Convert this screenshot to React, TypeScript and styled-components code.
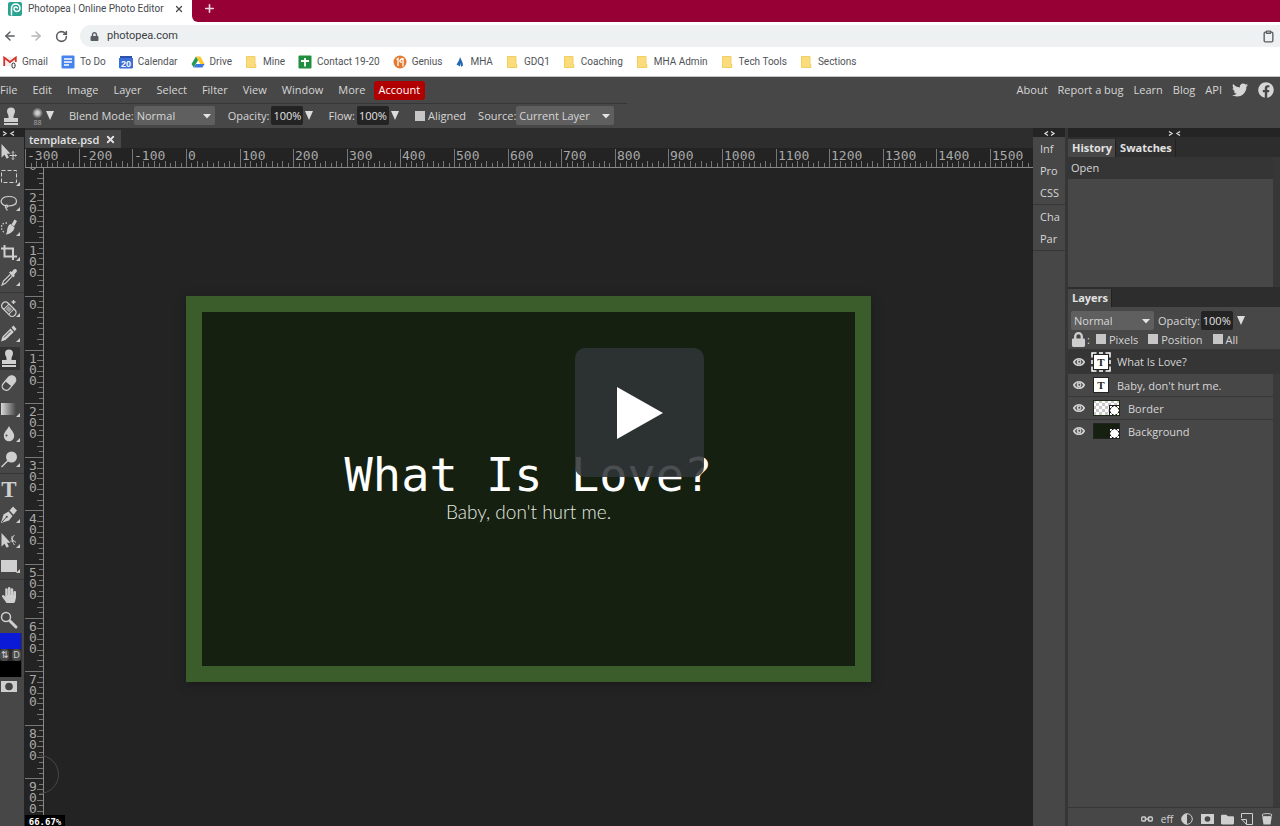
import React from "react";
import styled, { createGlobalStyle, css } from "styled-components";
import { FaFacebook, FaHandPaper, FaTwitter, FaFolder, FaLock } from "react-icons/fa";
import { ArrowLeft, ArrowRight, RotateCw, Clipboard, Plus, X } from "lucide-react";

const ui = `"Open Sans", "Noto Sans", sans-serif`;
const chrome = `Roboto, "Open Sans", sans-serif`;
const mono = `"DejaVu Sans Mono", monospace`;

const c = {
  panel: "#474747",
  dark: "#2d2d2d",
  darker: "#232323",
  selected: "#353535",
  line: "#363636",
  text: "#d6d6d6",
  icon: "#cfcfcf",
};

const Global = createGlobalStyle`
  *, *::before, *::after { box-sizing: border-box; }
  body { margin: 0; background: ${c.darker}; font-family: ${ui}; font-size: 11px; color: ${c.text}; }
  button, input, select { font: inherit; color: inherit; margin: 0; padding: 0; border: 0; background: none; border-radius: 0; }
  a { color: inherit; text-decoration: none; }
  svg { display: block; flex: none; }
`;

const Page = styled.div`
  display: flex;
  flex-direction: column;
  height: 100vh;
  overflow: hidden;
`;

/* Browser frame */

const TabStrip = styled.div`
  display: flex;
  align-items: stretch;
  height: 22px;
  background: #fff;
`;

const BrowserTab = styled.div`
  display: flex;
  align-items: center;
  gap: 6px;
  width: 192px;
  padding: 0 8px 5px;
  background: #fff;
  color: #45494d;
  font: 10px/16px ${chrome};
`;

const TabTitle = styled.span`
  flex: 1;
  white-space: nowrap;
`;

const TabRest = styled.div`
  flex: 1;
  display: flex;
  align-items: center;
  padding: 0 11px 5px;
  height: 22px;
  border-bottom-left-radius: 6px;
  background: #970034;
  color: #f0d5de;
`;

const IconButton = styled.button`
  display: grid;
  place-items: center;
  cursor: pointer;
`;

const AddressRow = styled.div`
  display: flex;
  align-items: center;
  gap: 12px;
  height: 28px;
  padding-left: 3px;
  background: #fff;
  color: #5a5e62;
`;

const AddressBox = styled.label`
  flex: 1;
  display: flex;
  align-items: center;
  gap: 8px;
  height: 22px;
  padding: 0 5px 0 10px;
  border-radius: 11px 0 0 11px;
  background: #eef1f2;
`;

const AddressInput = styled.input`
  flex: 1;
  font: 11px/16px ${chrome};
  color: #3c4043;
`;

const Bookmarks = styled.nav`
  display: flex;
  align-items: center;
  height: 27px;
  gap: 13px;
  padding: 0 3px 2px;
  background: #fff;
  border-bottom: 1px solid #c4c4c4;
  color: #505357;
  font: 10px/16px ${chrome};
`;

const Bookmark = styled.a`
  display: flex;
  align-items: center;
  gap: 5px;
  white-space: nowrap;
`;

/* Editor bars */

const MenuBar = styled.header`
  display: flex;
  align-items: center;
  justify-content: space-between;
  height: 26px;
  background: ${c.panel};
`;

const MenuGroup = styled.nav<{ $gap: number }>`
  display: flex;
  align-items: center;
  gap: ${(p) => p.$gap}px;
  padding: 0 6px 0 0;
  line-height: 18px;
`;

const Account = styled.button`
  margin-left: -7px;
  padding: 0 5px;
  height: 19px;
  border-radius: 3px;
  background: #b10000;
  color: #fff;
`;

const OptionsBar = styled.div`
  display: flex;
  align-items: center;
  height: 25px;
  padding-left: 3px;
  background: linear-gradient(${c.line}, ${c.line}) 0 0 / 627px 1px no-repeat ${c.panel};
  white-space: nowrap;
`;

const OptionGroup = styled.div<{ $gap?: number; $after: number }>`
  display: flex;
  align-items: center;
  gap: ${(p) => p.$gap ?? 2}px;
  margin-right: ${(p) => p.$after}px;
`;

const BrushPreview = styled.button`
  display: flex;
  align-items: center;
  gap: 3px;
`;

const SelectBox = styled.div<{ $width: number }>`
  position: relative;
  width: ${(p) => p.$width}px;
  height: 19px;

  select {
    width: 100%;
    height: 19px;
    padding-left: 3px;
    border-radius: 2px;
    background: #5f5f5f;
    appearance: none;
  }

  svg {
    position: absolute;
    right: 4px;
    top: 8px;
    pointer-events: none;
  }
`;

const NumberBox = styled.input`
  width: 32px;
  height: 19px;
  border-radius: 2px;
  background: ${c.darker};
  text-align: center;
  color: #e4e4e4;
`;

const Tick = styled.input`
  appearance: none;
  width: 10px;
  height: 10px;
  background: #c6c6c6;
`;

const CheckLabel = styled.label`
  display: flex;
  align-items: center;
  gap: 3px;
`;

/* Workspace */

const Work = styled.div`
  flex: 1;
  min-height: 0;
  display: flex;
  background: ${c.darker};
`;

const Collapse = styled.button`
  flex: none;
  display: grid;
  place-items: center;
  width: 100%;
  height: 9px;
  padding-top: 2px;
  background: #242424;
  color: #ddd;
`;

const ToolColumn = styled.aside`
  width: 24px;
  display: flex;
  flex-direction: column;
  background: ${c.panel};

  > ${Collapse} {
    padding-right: 7px;
  }
`;

const ToolGroup = styled.div`
  display: flex;
  flex-direction: column;
  padding: 3px 0 2px;
  border-bottom: 1px solid ${c.line};

  &:last-of-type {
    padding-bottom: 0;
    border-bottom: 0;
  }
`;

const ToolButton = styled.button<{ $active?: boolean }>`
  display: block;
  width: 22px;
  height: 25px;
  ${(p) =>
    p.$active &&
    css`
      background: linear-gradient(#333, #333) 0 1px / 20px 23px no-repeat;
    `}
`;

const Colours = styled.section`
  display: flex;
  flex-direction: column;
  width: 22px;
  height: 44px;
  border-right: 1px solid #333;
  background: #000;
`;

const Swatch = styled.button<{ $colour: string }>`
  flex: 1;
  background: ${(p) => p.$colour};
`;

const SwapRow = styled.div`
  display: flex;
  justify-content: space-between;
  height: 12px;
  background: #2a2a2a;
  font-size: 9px;
  line-height: 12px;

  button {
    width: 9px;
    border-radius: 4px;
    background: #4a4a4a;
  }
`;

const DocColumn = styled.main`
  flex: 1;
  min-width: 0;
  display: flex;
  flex-direction: column;
  margin-left: 1px;
  position: relative;
`;

const DocTabs = styled.div`
  display: flex;
  align-items: flex-end;
  height: 20px;
  background: ${c.dark};
`;

const DocTab = styled.div`
  display: flex;
  align-items: center;
  gap: 6px;
  height: 18px;
  padding: 0 5px 0 4px;
  background: ${c.panel};
  font-weight: 600;
  color: #e2e2e2;
`;

const TopRuler = styled.div`
  height: 20px;
`;

const Body = styled.div`
  flex: 1;
  min-height: 0;
  display: flex;
`;

const SideRuler = styled.div`
  width: 19px;
`;

const Stage = styled.div`
  flex: 1;
  display: flex;
  align-items: center;
  justify-content: center;
  padding: 0 20px 16px 0;
`;

const Artboard = styled.section`
  display: flex;
  flex-direction: column;
  align-items: center;
  width: 685px;
  height: 386px;
  padding-top: 136px;
  border: 16px solid #3b5d2c;
  background: #152010;
  box-shadow: 0 2px 8px #1a1a1a;
  color: #fff;

  h1 {
    margin: 0;
    font: 400 47px/54px ${mono};
    white-space: nowrap;
  }

  p {
    margin: 0;
    font: 300 19px/20px Lato, sans-serif;
    color: #e6eae2;
  }
`;

const BrushRing = styled.div`
  position: absolute;
  left: -5px;
  bottom: 32px;
  width: 39px;
  height: 39px;
  clip-path: inset(0 0 0 19px);
  border: 1px solid #484848;
  border-radius: 50%;
`;

const ZoomBadge = styled.div`
  position: absolute;
  left: 0;
  bottom: 0;
  width: 40px;
  height: 11px;
  background: #000;
  color: #fff;
  font: 700 9px/14px ${mono};
  text-align: center;
`;

const SideTabs = styled.nav`
  width: 32px;
  display: flex;
  flex-direction: column;
  background: ${c.panel};
`;

const SideGroup = styled.div`
  display: flex;
  flex-direction: column;
  padding-bottom: 1px;
  border-bottom: 1px solid ${c.line};
`;

const SideTab = styled.button`
  height: 22px;
  padding-left: 7px;
  text-align: left;
`;

const Panels = styled.aside`
  width: 215px;
  display: flex;
  flex-direction: column;
  border-left: 3px solid #363636;
  background: ${c.dark};
`;

const PanelTabs = styled.div`
  display: flex;
  height: 18px;
  margin-top: 2px;
`;

const PanelTab = styled.button<{ $active?: boolean }>`
  padding: 0 3px 1px 4px;
  font-weight: 700;
  color: #e2e2e2;
  background: ${(p) => (p.$active ? c.panel : "#2f2f2f")};
  border-right: 1px solid #222;
`;

const History = styled.div`
  display: flex;
  flex-direction: column;
  height: 130px;
  padding-right: 7px;
  background: #373737;
`;

const HistoryItem = styled.button`
  height: 22px;
  padding: 0 0 1px 3px;
  text-align: left;
  background: ${c.selected};
`;

const Blank = styled.div`
  flex: 1;
  background: ${c.panel};
`;

const LayerOptions = styled.div`
  display: flex;
  flex-direction: column;
  gap: 1px;
  height: 43px;
  padding: 4px 3px 0;
  background: ${c.panel};
  border-bottom: 1px solid ${c.line};
`;

const OptionLine = styled.div<{ $gap: number }>`
  display: flex;
  align-items: center;
  gap: ${(p) => p.$gap}px;
  height: 18px;
`;

const LayerArea = styled.div`
  flex: 1;
  display: flex;
  flex-direction: column;
  padding-right: 7px;
  background: #3a3a3a;
`;

const LayerList = styled.ul`
  margin: 0;
  padding: 0;
  list-style: none;
`;

const LayerRow = styled.li<{ $active?: boolean }>`
  display: flex;
  align-items: center;
  gap: 8px;
  height: ${(p) => (p.$active ? 24 : 23)}px;
  padding-left: 5px;
  border-bottom: 1px solid ${c.line};
  background: ${(p) => (p.$active ? c.selected : c.panel)};
  margin-right: ${(p) => (p.$active ? -7 : 0)}px;
  &:last-child {
    border-bottom-color: ${c.panel};
  }
`;

const PanelFooter = styled.div`
  display: flex;
  align-items: center;
  justify-content: flex-end;
  gap: 4px;
  height: 19px;
  padding: 4px 5px 0 0;
  border-top: 1px solid ${c.line};
  background: ${c.panel};

  button {
    width: 16px;
    height: 14px;
    display: grid;
    place-items: center;
    line-height: 14px;
    font-size: 10px;
  }
`;

const PlayButton = styled.button`
  position: fixed;
  left: 50%;
  top: 50%;
  width: 129px;
  height: 129px;
  margin: -65px 0 0 -65px;
  display: grid;
  place-items: center;
  border-radius: 10px;
  background: rgba(48, 52, 55, 0.87);
`;

/* Drawings */

const Caret = ({ size = 8 }: { size?: number }) => (
  <svg width={size} height="5" viewBox="0 0 8 5">
    <path d="M0 0H8L4 4.6Z" fill="#e4e4e4" />
  </svg>
);

const Arrow = () => (
  <svg width="8" height="9" viewBox="0 0 8 9">
    <path d="M0 0H8L4 9Z" fill="#dcdcdc" />
  </svg>
);

const Chevrons = ({ out }: { out?: boolean }) => (
  <svg width="13" height="7" viewBox="0 0 13 7" fill="none" stroke="#ddd" strokeWidth="1.300">
    <path d={out ? "M5 1.500 2 3.500 5 5.500M8 1.500 11 3.500 8 5.500" : "M1 1.500 4 3.500 1 5.500M12 1.500 9 3.500 12 5.500"} />
  </svg>
);

const Corner = () => <path d="M20 17v4h-4z" fill={c.icon} />;

const stamp = "M9 3.500a4 4 0 0 1 4 4c0 2-1.500 3-1.500 5v1.500H16V18H2v-4h4.500v-1.500C6.500 10.500 5 9.500 5 7.500a4 4 0 0 1 4-4ZM2 19h14v2H2Z";

const f = c.icon;
type Tool = { name: string; corner?: boolean; active?: boolean; art: React.ReactNode };
const groups: Tool[][] = [
  [
    { name: "Move", art: <><path d="M1.500 4v13.500l3-2.700 2.200 4 2.200-1.200-2-3.800h3.600Z" fill={f} /><path d="M13 11.500v8M9.500 15.500h7M12 12.500l1-1 1 1M12 18.500l1 1 1-1M15.500 14.500l1 1-1 1" stroke={f} fill="none" /></> },
    { name: "Select", corner: true, art: <rect x="1.500" y="5.500" width="15" height="12" fill="none" stroke={f} strokeDasharray="4 2" /> },
    { name: "Lasso", corner: true, art: <path d="M5.500 16C2 14.500.7 12.500 1.300 10.500 2 8 5.500 6.500 9 6.500c4.500 0 7.500 2 7.500 4.800 0 2.900-3.500 4.700-8.500 4.700-.8-1.500-2.800-1-2.800 0 0 1.200 2 1.400 2.800.3M5.500 17c.3 2 1.500 2 1.800 3.500" fill="none" stroke={f} strokeWidth="1.200" /> },
    { name: "Quick Selection", corner: true, art: <><path d="M14.500 4.500l2.500 1.500-2.800 5.200-2.700-1.700ZM10.500 9l4 3.200c-.5 4-3.500 6.500-9 7.300 2.200-2 1.200-4.500 2.200-7 .6-1.700 1.500-2.800 2.800-3.500Z" fill={f} /><path d="M7 8H5C2.500 8.500 1.500 10 1.500 12.500S3 17 5 17.500" fill="none" stroke={f} strokeWidth="1.300" strokeDasharray="1.500 1.500" /></> },
    { name: "Crop", corner: true, art: <path d="M4.500 5v11.500H17M1 8.500h12V20" fill="none" stroke={f} strokeWidth="2" /> },
    { name: "Eyedropper", corner: true, art: <><path d="M9 7.500l1.700-1.200 1 .6 2-2.400c1.900-1.700 4.300.7 2.800 2.600L14.200 9.500l.6 1.200-1.600 1.800Z" fill={f} /><path d="M10.200 9.500 3.500 16 2 20l3.500-1.700 6.500-7" fill="none" stroke={f} strokeWidth="1.200" /></> },
  ],
  [
    { name: "Heal", corner: true, art: <><g transform="rotate(45 9 13)"><rect x="0.500" y="9.500" width="17" height="7.500" rx="3.500" fill="none" stroke={f} strokeWidth="1.300" /><path d="M5.500 9.500v7.500M12.500 9.500v7.500" stroke={f} /><rect x="6.500" y="11" width="5" height="4.500" fill="#999" /></g><path d="M13.500 4v4M11.500 6h4" stroke={f} strokeWidth="1.300" /></> },
    { name: "Pencil", corner: true, art: <><path d="M11.500 6.500 13.500 4.500l3 3.500-1.800 2.200ZM10.500 7.500l3.300 3.500-8.300 8L1 20.500 2.500 15.500Z" fill={f} /><path d="M4 16.500 10.500 10" stroke="#474747" /></> },
    { name: "Clone Stamp", active: true, art: <path d={stamp} fill={f} /> },
    { name: "Eraser", art: <g transform="rotate(-50 9 12)"><rect x="0.700" y="8" width="16.500" height="8" rx="4" fill="none" stroke={f} strokeWidth="1.300" /><path d="M8 8h5a4 4 0 0 1 0 8H8Z" fill={f} /></g> },
    { name: "Gradient", corner: true, art: <rect x="1" y="7" width="15" height="12" fill="url(#fade)" /> },
    { name: "Blur", corner: true, art: <><path d="M9 5c1.500 3.500 5.200 6 5.200 10a5.200 5.200 0 0 1-10.400 0C3.800 11 7.500 8.500 9 5Z" fill={f} /><circle cx="6.500" cy="14.500" r="1" fill="#474747" /></> },
    { name: "Dodge", corner: true, art: <><circle cx="11.500" cy="11" r="5.500" fill={f} /><path d="M8 14.500 1.500 21" stroke={f} strokeWidth="1.500" /></> },
  ],
  [
    { name: "Type", art: <text x="9" y="20" textAnchor="middle" fill={f} fontFamily="Liberation Serif, serif" fontWeight="700" fontSize="23">T</text> },
    { name: "Pen", corner: true, art: <><path d="M1 21 3.500 12.500 8.500 9.500l4 4.500-3.500 4.500Z" fill={f} /><path d="M2 20l4.500-5" stroke="#474747" /><circle cx="6.800" cy="14.700" r="1" fill="#474747" /><path d="M9.500 8.500 13 4.500l4 4-3.500 4.200Z" fill={f} /></> },
    { name: "Path Select", corner: true, art: <><path d="M1.500 6v13.500l3-2.700 2.200 4 2.200-1.200-2-3.800h3.600Z" fill={f} /><path d="M14.500 8c-3 3-3 6 0 10M11 11.500l5 4M12 9v3M10.500 14h3" stroke={f} fill="none" /></> },
    { name: "Shape", corner: true, art: <rect x="1" y="8" width="16" height="12" fill={f} /> },
  ],
  [
    { name: "Hand", art: <FaHandPaper x="1" y="4" size={16} color={f} /> },
    { name: "Zoom", art: <><circle cx="6" cy="9" r="4.500" fill="none" stroke={f} strokeWidth="1.500" /><path d="M10 13l6 6" stroke={f} strokeWidth="3" strokeLinecap="round" /></> },
  ],
];

const UNIT = 53.6;
const DIGIT = 11;

function Ruler({ vertical }: { vertical?: boolean }) {
  const box = React.useRef<SVGSVGElement>(null);
  const [length, setLength] = React.useState(vertical ? 658 : 1008);

  React.useLayoutEffect(() => {
    const measure = () => {
      const r = box.current!.getBoundingClientRect();
      setLength(vertical ? r.height : r.width);
    };
    measure();
    window.addEventListener("resize", measure);
    return () => window.removeEventListener("resize", measure);
  }, [vertical]);

  const zero = vertical ? 128 : 161;
  const marks: React.ReactNode[] = [];
  for (let n = -3; zero + n * UNIT < length; n++) {
    const at = zero + n * UNIT;
    const px = Math.round(at) + 0.5;
    marks.push(<path key={`m${n}`} d={vertical ? `M0 ${px}H18` : `M${px} 1V20`} stroke="#777" />);
    for (let i = 1; i < 10; i++) {
      const p = Math.round(at + (i * UNIT) / 10) + 0.5;
      const len = i % 2 ? 4 : 6;
      marks.push(
        <path key={`t${n}-${i}`} d={vertical ? `M${18 - len} ${p}H18` : `M${p} ${19 - len}V19`} stroke="#777" />
      );
    }
    if (vertical) {
      String(Math.abs(n * 100)).split("").forEach((d, i) => {
        const y = Math.round(at) + 13 + i * DIGIT;
        if (y > 0 && y < length) marks.push(<text key={`l${n}-${i}`} x="4" y={y}>{d}</text>);
      });
    } else if (at + 36 < length) {
      marks.push(<text key={`l${n}`} x={Math.round(at) + 2} y="12">{n * 100}</text>);
    }
  }
  return (
    <svg ref={box} width="100%" height="100%" fill="#a8a8a8" fontFamily={mono} fontSize="13">
      {marks}
      {vertical ? <path d={`M18.500 0V${length}`} stroke="#888" /> : <path d={`M0 19.500H${length}`} stroke="#888" />}
    </svg>
  );
}

const folder = (
  <svg width="13" height="14" viewBox="0 0 13 14">
    <path d="M1 1h9v8h1v4H1Z" fill="#fbdc7c" /><path d="M1.500 1.500h8.500v8h.8v3H1.500Z" fill="none" stroke="#f2cf63" />
  </svg>
);

const bookmarks: [string, React.ReactNode][] = [
  ["Gmail", <svg key="g" width="14" height="14" viewBox="0 0 14 14"><path d="M1 2h12v9H1Z" fill="#f4eeee" /><path d="M1.200 11V2.500L7 7l5.800-4.500V7" fill="none" stroke="#d3352b" strokeWidth="1.800" /><rect x="8" y="7" width="5" height="7" fill="#fff" /><rect x="9" y="8" width="3" height="5" rx="1.500" fill="none" stroke="#222" /></svg>],
  ["To Do", <svg key="t" width="14" height="14" viewBox="0 0 14 14"><rect x="0.500" y="0.500" width="13" height="13" rx="1" fill="#4583ee" /><path d="M3 4h8M3 7h8M3 10h5" stroke="#fff" strokeWidth="1.400" /></svg>],
  ["Calendar", <svg key="c" width="14" height="14" viewBox="0 0 14 14"><path d="M1 1h12v3H1Z" fill="#2d51a8" /><path d="M0 3h14v9.500l-1 1H1l-1-1Z" fill="#3c6fd8" /><text x="7" y="11.500" textAnchor="middle" fontSize="9" fontWeight="700" fontFamily="Liberation Sans, sans-serif" fill="#fff">20</text></svg>],
  ["Drive", <svg key="d" width="14" height="14" viewBox="0 0 14 14"><path d="M5 1.500 0.500 9 2.700 12.500 7.200 5Z" fill="#249a56" /><path d="M5 1.500h4.400L13.600 9H9.300Z" fill="#fdc92f" /><path d="M5 9h8.600l-2.200 3.500H2.800Z" fill="#3b78e0" /></svg>],
  ["Mine", folder],
  ["Contact 19-20", <svg key="k" width="14" height="14" viewBox="0 0 14 14"><rect x="0.500" y="0.500" width="13" height="13" rx="1" fill="#1f8e3f" /><path d="M3 6h8M7 3v8.500" stroke="#fff" strokeWidth="1.800" /></svg>],
  ["Genius", <svg key="n" width="14" height="14" viewBox="0 0 14 14"><circle cx="7" cy="7" r="6.500" fill="#e5792f" /><path d="M3.500 4.500 5 3.500V11M10 3.500c-4 1-4 3.500-1 3.700M10 3v8.500" fill="none" stroke="#fff" strokeWidth="1.300" /></svg>],
  ["MHA", <svg key="m" width="10" height="14" viewBox="0 0 10 14"><path d="M5 2c1 2.500 3 5 3 8.500L6 12V8L5 11.500 1.500 9.500C3 7 4.500 5 5 2Z" fill="#2468b4" /></svg>],
  ["GDQ1", folder],
  ["Coaching", folder],
  ["MHA Admin", folder],
  ["Tech Tools", folder],
  ["Sections", folder],
];

const Eye = () => (
  <svg width="12" height="10" viewBox="0 0 13 10">
    <path d="M.8 5C3.500.2 9.500.2 12.200 5 9.500 9.800 3.500 9.800.8 5Z" fill="none" stroke={f} strokeWidth="1.700" />
    <circle cx="6.500" cy="5" r="2.600" fill={f} /><circle cx="6.800" cy="4.700" r="1" fill="#474747" />
  </svg>
);

const SmartMark = () => (
  <g>
    <rect x="16" y="5" width="10" height="10" fill="#1a1a1a" />
    <rect x="18" y="7" width="7" height="7" rx="1.500" fill="#fff" />
    <path d="M17 6.500h2M20.500 6.500h2M24 6.500h2M17 14.500h2M20.500 14.500h2M24 14.500h2M17.500 7v1M25.500 7v1M17.500 13v1M25.500 13v1M17.500 9.500v2M25.500 9.500v2" stroke="#fff" />
  </g>
);

const TextThumb = ({ marked }: { marked?: boolean }) => (
  <svg width="16" height="16" viewBox="0 0 16 16" overflow="visible">
    {marked && <path d="M-1 3.500V-1H3.500M6 -1H10M12.500 -1H17V3.500M17 6V10M17 12.500V17H12.500M10 17H6M3.500 17H-1V12.500M-1 10V6" fill="none" stroke="#fff" strokeWidth="1.500" />}
    <rect x="0.500" y="0.500" width="15" height="15" fill="#fff" stroke="#222" />
    <text x="8" y="12" textAnchor="middle" fontFamily="Liberation Serif, serif" fontWeight="700" fontSize="11" fill="#222">T</text>
  </svg>
);

const BorderThumb = () => (
  <svg width="27" height="16" viewBox="0 0 27 16">
    <defs><pattern id="checks" width="6" height="6" patternUnits="userSpaceOnUse"><rect width="6" height="6" fill="#fff" /><path d="M0 0h3v3H0ZM3 3h3v3H3Z" fill="#c9c9c9" /></pattern></defs>
    <rect x="0.500" y="0.500" width="26" height="15" fill="url(#checks)" stroke="#1c2a16" />
    <SmartMark />
  </svg>
);

const FillThumb = () => (
  <svg width="27" height="16" viewBox="0 0 27 16">
    <rect x="0.500" y="0.500" width="26" height="15" fill="#152010" stroke="#222" />
    <SmartMark />
  </svg>
);

const layers = [
  { name: "What Is Love?", active: true, thumb: <TextThumb marked /> },
  { name: "Baby, don't hurt me.", thumb: <TextThumb /> },
  { name: "Border", thumb: <BorderThumb /> },
  { name: "Background", thumb: <FillThumb /> },
];

const footer: [string, React.ReactNode][] = [
  ["Link", <svg key="1" width="12" height="6" viewBox="0 0 12 6" fill="none" stroke={f} strokeWidth="1.300"><rect x="0.700" y="1" width="4" height="4" rx="1" /><rect x="7.300" y="1" width="4" height="4" rx="1" /><path d="M3.500 3h5" /></svg>],
  ["Effects", "eff"],
  ["Adjustment", <svg key="3" width="12" height="12" viewBox="0 0 12 12"><circle cx="6" cy="6" r="5.300" fill="none" stroke={f} /><path d="M6 .7a5.300 5.300 0 0 0 0 10.600Z" fill={f} /></svg>],
  ["Mask", <svg key="4" width="13" height="10" viewBox="0 0 13 10"><rect width="13" height="10" fill={f} /><circle cx="6.500" cy="5" r="2.800" fill="#474747" /></svg>],
  ["Folder", <FaFolder key="5" size={13} color={f} />],
  ["New Layer", <svg key="6" width="12" height="12" viewBox="0 0 12 12" fill="none" stroke={f}><path d="M.5 5V.5h11v11H5.500M.5 6v0L5.500 11.500V6.500H.5Z" /></svg>],
  ["Delete", <svg key="7" width="12" height="12" viewBox="0 0 12 13"><ellipse cx="6" cy="2.300" rx="5.500" ry="1.700" fill="none" stroke={f} /><path d="M.8 3.500c2 1.200 8.400 1.200 10.400 0L9.800 12.500H2.200Z" fill={f} /></svg>],
];

function Select({ label, value, width }: { label: string; value: string; width: number }) {
  return (
    <SelectBox $width={width}>
      <select aria-label={label} defaultValue={value}><option>{value}</option></select>
      <Caret />
    </SelectBox>
  );
}

export default function App() {
  return (
    <Page>
      <Global />
      <TabStrip>
        <BrowserTab>
          <svg width="14" height="14" viewBox="0 0 14 14">
            <rect width="14" height="14" rx="2" fill="#2aa390" />
            <path d="M3.500 13.500V6.500C3.500 0 12 1 12 6c0 4.500-6 4.500-6 .8 0-2.500 3.500-2.300 3.300-.2" fill="none" stroke="#fff" strokeWidth="1.500" />
          </svg>
          <TabTitle>Photopea | Online Photo Editor</TabTitle>
          <IconButton aria-label="Close tab"><X size={10} strokeWidth={3} /></IconButton>
        </BrowserTab>
        <TabRest>
          <IconButton aria-label="New tab"><Plus size={13} strokeWidth={3} /></IconButton>
        </TabRest>
      </TabStrip>
      <AddressRow>
        <IconButton aria-label="Back"><ArrowLeft size={14} strokeWidth={2.5} /></IconButton>
        <IconButton aria-label="Forward"><ArrowRight size={14} strokeWidth={2.5} color="#b4b6b8" /></IconButton>
        <IconButton aria-label="Reload"><RotateCw size={13} strokeWidth={2.8} /></IconButton>
        <AddressBox>
          <FaLock size={9} />
          <AddressInput aria-label="Address" defaultValue="photopea.com" />
          <Clipboard size={13} strokeWidth={2.5} />
        </AddressBox>
      </AddressRow>
      <Bookmarks>
        {bookmarks.map(([name, icon]) => (
          <Bookmark key={name} href="#">{icon}{name}</Bookmark>
        ))}
      </Bookmarks>

      <MenuBar>
        <MenuGroup $gap={15}>
          {["File", "Edit", "Image", "Layer", "Select", "Filter", "View", "Window", "More"].map((m) => (
            <button key={m}>{m}</button>
          ))}
          <Account>Account</Account>
        </MenuGroup>
        <MenuGroup $gap={10}>
          {["About", "Report a bug", "Learn", "Blog", "API"].map((m) => <a key={m} href="#">{m}</a>)}
          <a href="#" aria-label="Twitter"><FaTwitter size={16} /></a>
          <a href="#" aria-label="Facebook"><FaFacebook size={16} /></a>
        </MenuGroup>
      </MenuBar>

      <OptionsBar>
        <OptionGroup $after={13}>
          <svg width="16" height="20" viewBox="1 2 16 20"><path d={stamp} fill={f} /></svg>
        </OptionGroup>
        <OptionGroup $after={15}>
          <BrushPreview aria-label="Brush">
            <svg width="11" height="20" viewBox="0 0 11 20">
              <defs><radialGradient id="soft"><stop offset="30%" stopColor="#ccc" /><stop offset="100%" stopColor="#ccc" stopOpacity="0" /></radialGradient></defs>
              <circle cx="5.500" cy="7" r="5.500" fill="url(#soft)" />
              <text x="5.500" y="19" textAnchor="middle" fontSize="7" fill="#aaa">88</text>
            </svg>
            <Arrow />
          </BrushPreview>
        </OptionGroup>
        <OptionGroup $after={13} $gap={0}>
          <span>Blend Mode:</span><Select label="Blend Mode" value="Normal" width={81} />
        </OptionGroup>
        <OptionGroup $after={15}>
          <label htmlFor="opacity">Opacity:</label><NumberBox id="opacity" defaultValue="100%" /><Arrow />
        </OptionGroup>
        <OptionGroup $after={16}>
          <label htmlFor="flow">Flow:</label><NumberBox id="flow" defaultValue="100%" /><Arrow />
        </OptionGroup>
        <OptionGroup $after={12}>
          <CheckLabel><Tick type="checkbox" />Aligned</CheckLabel>
        </OptionGroup>
        <OptionGroup $after={0} $gap={0}>
          <span>Source:</span><Select label="Source" value="Current Layer" width={98} />
        </OptionGroup>
      </OptionsBar>

      <Work>
        <ToolColumn>
          <Collapse aria-label="Collapse tools"><Chevrons /></Collapse>
          <svg width="0" height="0"><defs><linearGradient id="fade"><stop stopColor="#d8d8d8" /><stop offset="1" stopColor="#474747" /></linearGradient></defs></svg>
          {groups.map((tools, g) => (
            <ToolGroup key={g}>
              {tools.map((t) => (
                <ToolButton key={t.name} $active={t.active} aria-label={t.name}>
                  <svg width="22" height="25" viewBox="0 0 22 25">{t.art}{t.corner && <Corner />}</svg>
                </ToolButton>
              ))}
            </ToolGroup>
          ))}
          <Colours>
            <Swatch $colour="#0a1ad6" aria-label="Foreground" />
            <SwapRow><button>⇅</button><button>D</button></SwapRow>
            <Swatch $colour="#000" aria-label="Background" />
          </Colours>
          <ToolButton aria-label="Quick Mask">
            <svg width="22" height="25" viewBox="0 0 22 25"><rect x="1" y="4" width="16" height="11" fill={f} /><circle cx="9" cy="9.500" r="3.800" fill="#444" /></svg>
          </ToolButton>
        </ToolColumn>

        <DocColumn>
          <DocTabs>
            <DocTab>template.psd<IconButton aria-label="Close document"><X size={11} strokeWidth={4} /></IconButton></DocTab>
          </DocTabs>
          <TopRuler><Ruler /></TopRuler>
          <Body>
            <SideRuler><Ruler vertical /></SideRuler>
            <Stage>
              <Artboard>
                <h1>What Is Love?</h1>
                <p>Baby, don't hurt me.</p>
              </Artboard>
            </Stage>
          </Body>
          <BrushRing />
          <ZoomBadge>66.67%</ZoomBadge>
        </DocColumn>

        <SideTabs>
          <Collapse aria-label="Expand panels"><Chevrons out /></Collapse>
          <SideGroup>{["Inf", "Pro", "CSS"].map((t) => <SideTab key={t}>{t}</SideTab>)}</SideGroup>
          <SideGroup>{["Cha", "Par"].map((t) => <SideTab key={t}>{t}</SideTab>)}</SideGroup>
        </SideTabs>

        <Panels>
          <Collapse aria-label="Collapse panels"><Chevrons /></Collapse>
          <PanelTabs><PanelTab $active>History</PanelTab><PanelTab>Swatches</PanelTab></PanelTabs>
          <History><HistoryItem>Open</HistoryItem><Blank /></History>
          <PanelTabs><PanelTab $active>Layers</PanelTab></PanelTabs>
          <LayerOptions>
            <OptionLine $gap={4}>
              <Select label="Layer blend mode" value="Normal" width={83} />
              <OptionGroup $after={0} $gap={1}>
                <label htmlFor="layer-opacity">Opacity:</label>
                <NumberBox id="layer-opacity" defaultValue="100%" />
              </OptionGroup>
              <Arrow />
            </OptionLine>
            <OptionLine $gap={10}>
              <OptionGroup $after={-4} $gap={1}><FaLock size={15} color={f} />:</OptionGroup>
              {["Pixels", "Position", "All"].map((t) => (
                <CheckLabel key={t}><Tick type="checkbox" />{t}</CheckLabel>
              ))}
            </OptionLine>
          </LayerOptions>
          <LayerArea>
            <LayerList>
              {layers.map((l) => (
                <LayerRow key={l.name} $active={l.active}><Eye />{l.thumb}{l.name}</LayerRow>
              ))}
            </LayerList>
            <Blank />
          </LayerArea>
          <PanelFooter>
            {footer.map(([name, icon]) => <button key={name} aria-label={name}>{icon}</button>)}
          </PanelFooter>
        </Panels>
      </Work>

      <PlayButton aria-label="Play">
        <svg width="46" height="52" viewBox="0 0 46 52"><path d="M0 0 46 26 0 52Z" fill="#fff" /></svg>
      </PlayButton>
    </Page>
  );
}
